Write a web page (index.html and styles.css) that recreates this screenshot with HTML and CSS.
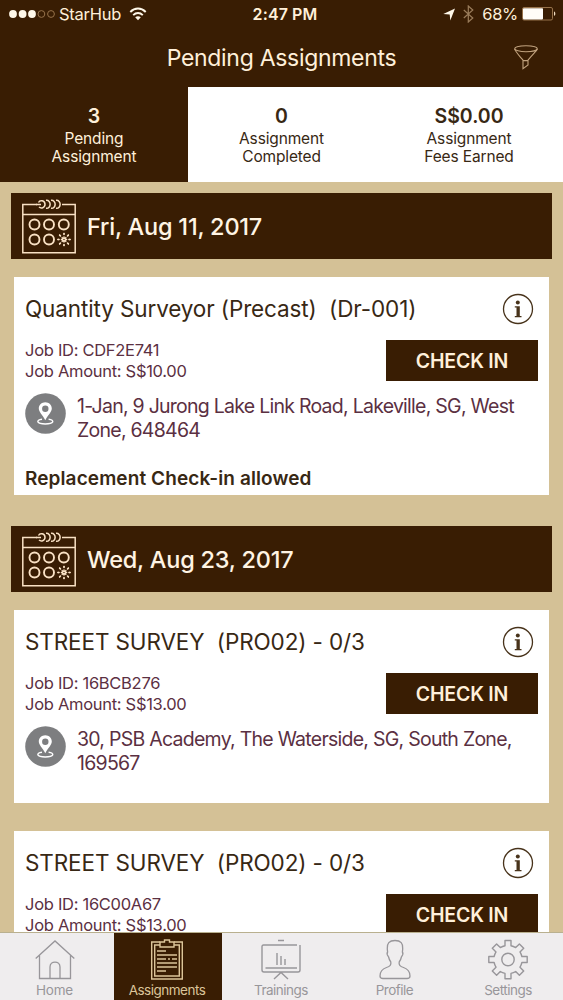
FILE: index.html
```html
<!DOCTYPE html>
<html lang="en">
<head>
<meta charset="utf-8">
<title>Pending Assignments</title>
<link rel="stylesheet" href="styles.css">
</head>
<body>
<svg class="defs" width="0" height="0">
  <symbol id="calendar" viewBox="0 0 54 55">
    <g fill="none" stroke="currentColor" stroke-width="1.5">
      <path d="M15 5.5H.8V53.8H53.2V5.5H40M.8 15.5H53.2"/>
      <path d="M14 5.5h5M16.500 3.500c1.500-3 6.500-2 6.500 1.800 0 3.700-4 4.500-6 2.700M24 1.300c5.500-.6 5.500 8.600 0 8M29 1.300c5.500-.6 5.500 8.600 0 8M34 1.300c5.500-.6 5.500 8.600 0 8"/>
      <g stroke-width="1.900"><circle cx="12.500" cy="25.500" r="5"/><circle cx="27" cy="25.500" r="5"/><circle cx="41.800" cy="25.500" r="5"/><circle cx="12.500" cy="40.500" r="5"/><circle cx="27" cy="40.500" r="5"/></g>
      <g stroke-width="1.500" stroke-linecap="round" stroke-dasharray="1.300 2.300" stroke-dashoffset="-1.300"><path d="M42 40.500v-6M42 40.500v6M42 40.500h-6M42 40.500h6M42 40.500l4.400-4.400M42 40.500l-4.400-4.400M42 40.500l4.400 4.400M42 40.500l-4.400 4.400"/></g>
      <path d="M42 35v-.6M42 46v.6M36.500 40.500h-.6M47.500 40.500h.6M46 36.500l.4-.4M38 36.500l-.4-.4M46 44.500l.4.400M38 44.500l-.4.400" stroke-linecap="round" stroke-width="1.300"/>
    </g>
  </symbol>
  <symbol id="info" viewBox="0 0 32 32">
    <circle cx="16" cy="16" r="14.500" fill="none" stroke="currentColor" stroke-width="1.300"/>
    <circle cx="15.800" cy="9.500" r="2" fill="currentColor"/>
    <path d="M12.800 13.300h5v9.700h1.700v1.200h-6.700v-1.200h1.700v-8.500h-1.700z" fill="currentColor"/>
  </symbol>
  <symbol id="pin" viewBox="0 0 41 41">
    <circle cx="20.500" cy="20.500" r="20.300" fill="#7d7e80"/>
    <path fill="#fff" fill-rule="evenodd" d="M20.300 9.300c-3.700 0-6.500 2.800-6.500 6.300 0 3.600 3.700 6.200 6.500 11.600 2.800-5.400 6.500-8 6.500-11.600 0-3.500-2.800-6.300-6.500-6.300zm0 3.200a3.200 3.200 0 1 1 0 6.400 3.200 3.200 0 0 1 0-6.400z"/>
    <path d="M17 26.200c-6.500.8-5.500 4.800 3.300 4.800s9.800-4 3.300-4.800" fill="none" stroke="#fff" stroke-width="1.400"/>
  </symbol>
</svg>

<main class="phone">
  <header class="top">
    <div class="status">
      <div class="status-left">
        <svg class="signal" width="46" height="10" viewBox="0 0 46 10"><g fill="#fff8ea"><circle cx="4" cy="5" r="3.900"/><circle cx="13.600" cy="5" r="3.900"/><circle cx="23" cy="5" r="3.900"/></g><g fill="none" stroke="#96724b"><circle cx="32.400" cy="5" r="3.400"/><circle cx="42" cy="5" r="3.400"/></g></svg>
        <span class="carrier">StarHub</span>
        <svg class="wifi" width="18" height="14" viewBox="0 0 18 14"><g fill="none" stroke="#fff8ea" stroke-width="1.900"><path d="M1.300 5c4.500-4.600 10.900-4.600 15.400 0"/><path d="M4.200 8.100c2.900-2.900 6.700-2.900 9.600 0"/></g><path d="M6.200 10.300c1.700-1.500 3.900-1.500 5.600 0L9 13.200z" fill="#fff8ea"/></svg>
      </div>
      <span class="clock">2:47 PM</span>
      <div class="status-right">
        <svg width="12" height="13" viewBox="0 0 12 13"><path d="M12 .5L7.300 12.500 6.700 6.500.3 6z" fill="#fff8ea"/></svg>
        <svg class="bluetooth" width="11" height="18" viewBox="0 0 11 18"><path d="M.8 5l9 8L5.300 17V1l4.500 4-9 8" fill="none" stroke="#9a7c5a" stroke-width="1.200"/></svg>
        <span class="percent">68%</span>
        <svg width="34" height="14" viewBox="0 0 34 14"><rect x=".5" y=".5" width="30" height="12.500" rx="1.500" fill="none" stroke="#96724b"/><rect x="1" y="1.200" width="20" height="11.200" rx=".8" fill="#fffdf8"/><path d="M32 4.600c1.800.5 1.800 3.900 0 4.400z" fill="#f3dfc3"/></svg>
      </div>
    </div>
    <div class="navbar">
      <h1 class="screen-title">Pending Assignments</h1>
      <svg class="filter" width="24" height="25" viewBox="0 0 24 25"><g fill="none" stroke="#c1a27e" stroke-width="1.100"><ellipse cx="12" cy="3.700" rx="11.300" ry="3"/><path d="M.7 4c.3 2 1.800 3.500 8.300 11.200v8.500l5-3.700v-4.800C20.500 7.500 22.700 6 23.300 4M9 15.600h5"/></g></svg>
    </div>
  </header>

  <section class="stats">
    <div class="stat active"><b>3</b><span>Pending</span><span>Assignment</span></div>
    <div class="stat"><b>0</b><span>Assignment</span><span>Completed</span></div>
    <div class="stat"><b>S$0.00</b><span>Assignment</span><span>Fees Earned</span></div>
  </section>

  <section class="list">
    <div class="date"><svg class="calendar"><use href="#calendar"/></svg><span>Fri, Aug 11, 2017</span></div>
    <article class="card first">
      <div class="card-head"><h2>Quantity Surveyor (Precast)&nbsp; (Dr-001)</h2><svg class="info"><use href="#info"/></svg></div>
      <div class="job"><div><p>Job ID: CDF2E741</p><p>Job Amount: S$10.00</p></div><button class="check">CHECK IN</button></div>
      <div class="place"><svg class="pin"><use href="#pin"/></svg><p>1-Jan, 9 Jurong Lake Link Road, Lakeville, SG, West<br>Zone, 648464</p></div>
      <p class="note">Replacement Check-in allowed</p>
    </article>
    <div class="date second"><svg class="calendar"><use href="#calendar"/></svg><span>Wed, Aug 23, 2017</span></div>
    <article class="card">
      <div class="card-head"><h2>STREET SURVEY&nbsp; (PRO02) - 0/3</h2><svg class="info"><use href="#info"/></svg></div>
      <div class="job"><div><p>Job ID: 16BCB276</p><p>Job Amount: S$13.00</p></div><button class="check">CHECK IN</button></div>
      <div class="place"><svg class="pin"><use href="#pin"/></svg><p>30, PSB Academy, The Waterside, SG, South Zone,<br>169567</p></div>
    </article>
    <article class="card last">
      <div class="card-head"><h2>STREET SURVEY&nbsp; (PRO02) - 0/3</h2><svg class="info"><use href="#info"/></svg></div>
      <div class="job"><div><p>Job ID: 16C00A67</p><p>Job Amount: S$13.00</p></div><button class="check">CHECK IN</button></div>
    </article>
  </section>

  <nav class="tabs">
    <a class="tab home"><svg width="40" height="41" viewBox="0 0 40 41"><g fill="none" stroke="currentColor" stroke-width="1.300"><path d="M.7 19.500L20 2l19.300 17.500M4.500 16.500V39.500H35.500V16.500"/><path d="M15 39.500V28c0-6.500 10-6.500 10 0v11.500"/></g></svg><span>Home</span></a>
    <a class="tab current"><svg width="40" height="41" viewBox="0 0 40 41"><g fill="none" stroke="currentColor" stroke-width="1.400"><path d="M13 3H4.700V40H35.300V3H27"/><path d="M13 6H7.700V37H32.300V6H27"/><path d="M13 3v5h14V3h-4.500V1h-5v2z"/><path d="M10 12h9M10 16h20M10 20h9m2 0h2m2 0h5M10 24h20M10 28h20M10 32h9"/></g></svg><span>Assignments</span></a>
    <a class="tab trainings"><svg width="40" height="41" viewBox="0 0 40 41"><g fill="none" stroke="currentColor" stroke-width="1.400"><path d="M17 1.500h6M36 6H2.500Q1 6 1 7.500V31q0 2 2 2H37q2 0 2-2V6M4.500 29H36M16 14v12M20 17v9M24 20v6M13 40l7-6.500L27 40"/></g></svg><span>Trainings</span></a>
    <a class="tab profile"><svg width="40" height="41" viewBox="0 0 40 41"><path d="M20 1.500c-6 0-8 3-7.700 8 0 1.500.2 2.500.3 3.500-1.500 2 .2 4 1 5 .5 2.500 1.200 3.700 2.200 5 .6 3-.8 4.500-4.300 5.500C7 30 5 32 5 37q0 2.500 3 2.500h24q3 0 3-2.500c0-5-2-7-6.500-8.500-3.500-1-4.900-2.500-4.300-5.500 1-1.300 1.700-2.500 2.200-5 .8-1 2.500-3 1-5 .1-1 .3-2 .3-3.500.3-5-1.700-8-7.700-8z" fill="none" stroke="currentColor" stroke-width="1.300"/></svg><span>Profile</span></a>
    <a class="tab settings"><svg width="40" height="41" viewBox="0 0 40 41"><g fill="none" stroke="currentColor" stroke-width="1.400" stroke-linejoin="round"><path d="M17 1.500h6v5.200q2.500.6 4.700 1.900l3.700-3.700 4.300 4.300-3.700 3.700q1.300 2.200 1.900 4.600H39.200v6H33.900q-.6 2.500-1.900 4.700l3.700 3.700-4.300 4.300-3.700-3.700q-2.200 1.300-4.700 1.900v5.300h-6v-5.300q-2.500-.6-4.700-1.900l-3.700 3.700-4.300-4.300L8 28.200q-1.300-2.200-1.900-4.700H.8v-6H6.100Q6.700 15.100 8 12.900L4.300 9.200l4.300-4.300 3.700 3.700Q14.500 7.300 17 6.700z"/><circle cx="20" cy="20.500" r="6.200"/></g></svg><span>Settings</span></a>
  </nav>
</main>
</body>
</html>
```

FILE: styles.css
```css
* { box-sizing: border-box; }
body, h1, h2, p { margin: 0; font-weight: 400; }
.defs { position: absolute; }
.phone {
  width: 563px; height: 1000px; overflow: hidden;
  display: grid; grid-template-rows: 87px 95px 750px 68px;
  background: #d4c196; color: #382814;
  font-family: Inter, "Liberation Sans", sans-serif;
}
.top { background: #391d03; color: #fff0da; }
.status {
  display: grid; grid-template-columns: 1fr auto 1fr; align-items: center;
  height: 28px; padding: 0 7px 0 9px; font-size: 16.500px;
}
.status-left, .status-right { display: flex; align-items: center; }
.carrier { margin-left: 4px; letter-spacing: -.25px; }
.wifi { margin-left: 8px; }
.clock { margin-left: 5px; font-size: 16px; font-weight: 600; letter-spacing: .1px; }
.status-right { justify-content: flex-end; }
.bluetooth { margin: 0 8px; }
.percent { margin-right: 4px; letter-spacing: -.3px; }
.navbar { display: grid; grid-template-columns: 1fr auto 1fr; align-items: center; height: 59px; }
.screen-title { grid-column: 2; font-size: 23px; letter-spacing: -.3px; }
.filter { justify-self: end; margin-right: 25px; }

.stats { display: grid; grid-template-columns: 188px 187px 188px; background: #fff; }
.stat { display: flex; flex-direction: column; align-items: center; padding-top: 17px; font-size: 15.500px; line-height: 18.500px; letter-spacing: -.15px; }
.stat b { margin-bottom: 1.500px; font-size: 19.500px; line-height: 24px; font-weight: 600; letter-spacing: 0; }
.stat.active { background: #391d03; color: #fff0da; }

.list { padding: 11px 14px 0; overflow: hidden; }
.date {
  display: flex; align-items: center; gap: 11px; height: 66px; margin: 0 -3px;
  padding-left: 11px; background: #391d03; color: #fff4e4;
  font-size: 23.500px; font-weight: 500; letter-spacing: -.22px;
}
.date.second { margin-top: 31px; }
.calendar { width: 54px; height: 55px; color: #f9e1c4; }
.card { height: 193px; margin-top: 18px; padding: 0 11px; background: #fff; }
.card.first { height: 218px; }
.card.last { margin-top: 28px; }
.card-head { display: flex; align-items: center; justify-content: space-between; height: 63px; }
.card-head h2 { font-size: 22.500px; letter-spacing: -.12px; white-space: nowrap; }
.info { width: 32px; height: 32px; margin-right: 4px; color: #48331b; }
.job { display: flex; justify-content: space-between; color: #5b3042; font-size: 16.500px; line-height: 21px; font-weight: 300; letter-spacing: -.29px; }
.check {
  width: 152px; height: 41px; padding: 0; border: 0; background: #391d03; color: #fff0da;
  font: 600 19.500px Inter, "Liberation Sans", sans-serif; letter-spacing: -.2px;
}
.place { display: flex; gap: 11px; margin-top: 11px; color: #5b3042; font-size: 19.500px; line-height: 24px; font-weight: 300; letter-spacing: -.74px; white-space: nowrap; }
.place p { padding-top: 1px; }
.pin { width: 41px; height: 41px; flex: none; }
.note { margin-top: 25px; font-size: 19px; line-height: 24px; font-weight: 600; letter-spacing: .1px; }

.tabs { display: grid; grid-template-columns: 114px 108px 119px 108px 114px; background: #efedee; border-top: 1px solid #b9b08f; color: #98969a; }
.tab { display: flex; flex-direction: column; align-items: center; padding-top: 6px; font-size: 13.500px; line-height: 20px; letter-spacing: -.5px; }
.tab.home { padding-right: 5px; letter-spacing: -.2px; }
.tab.current { background: #391d03; color: #dcc59a; padding-right: 2px; }
.tab.trainings, .tab.profile { padding-right: 1px; }
.tab.settings { padding-left: 4px; }
```
